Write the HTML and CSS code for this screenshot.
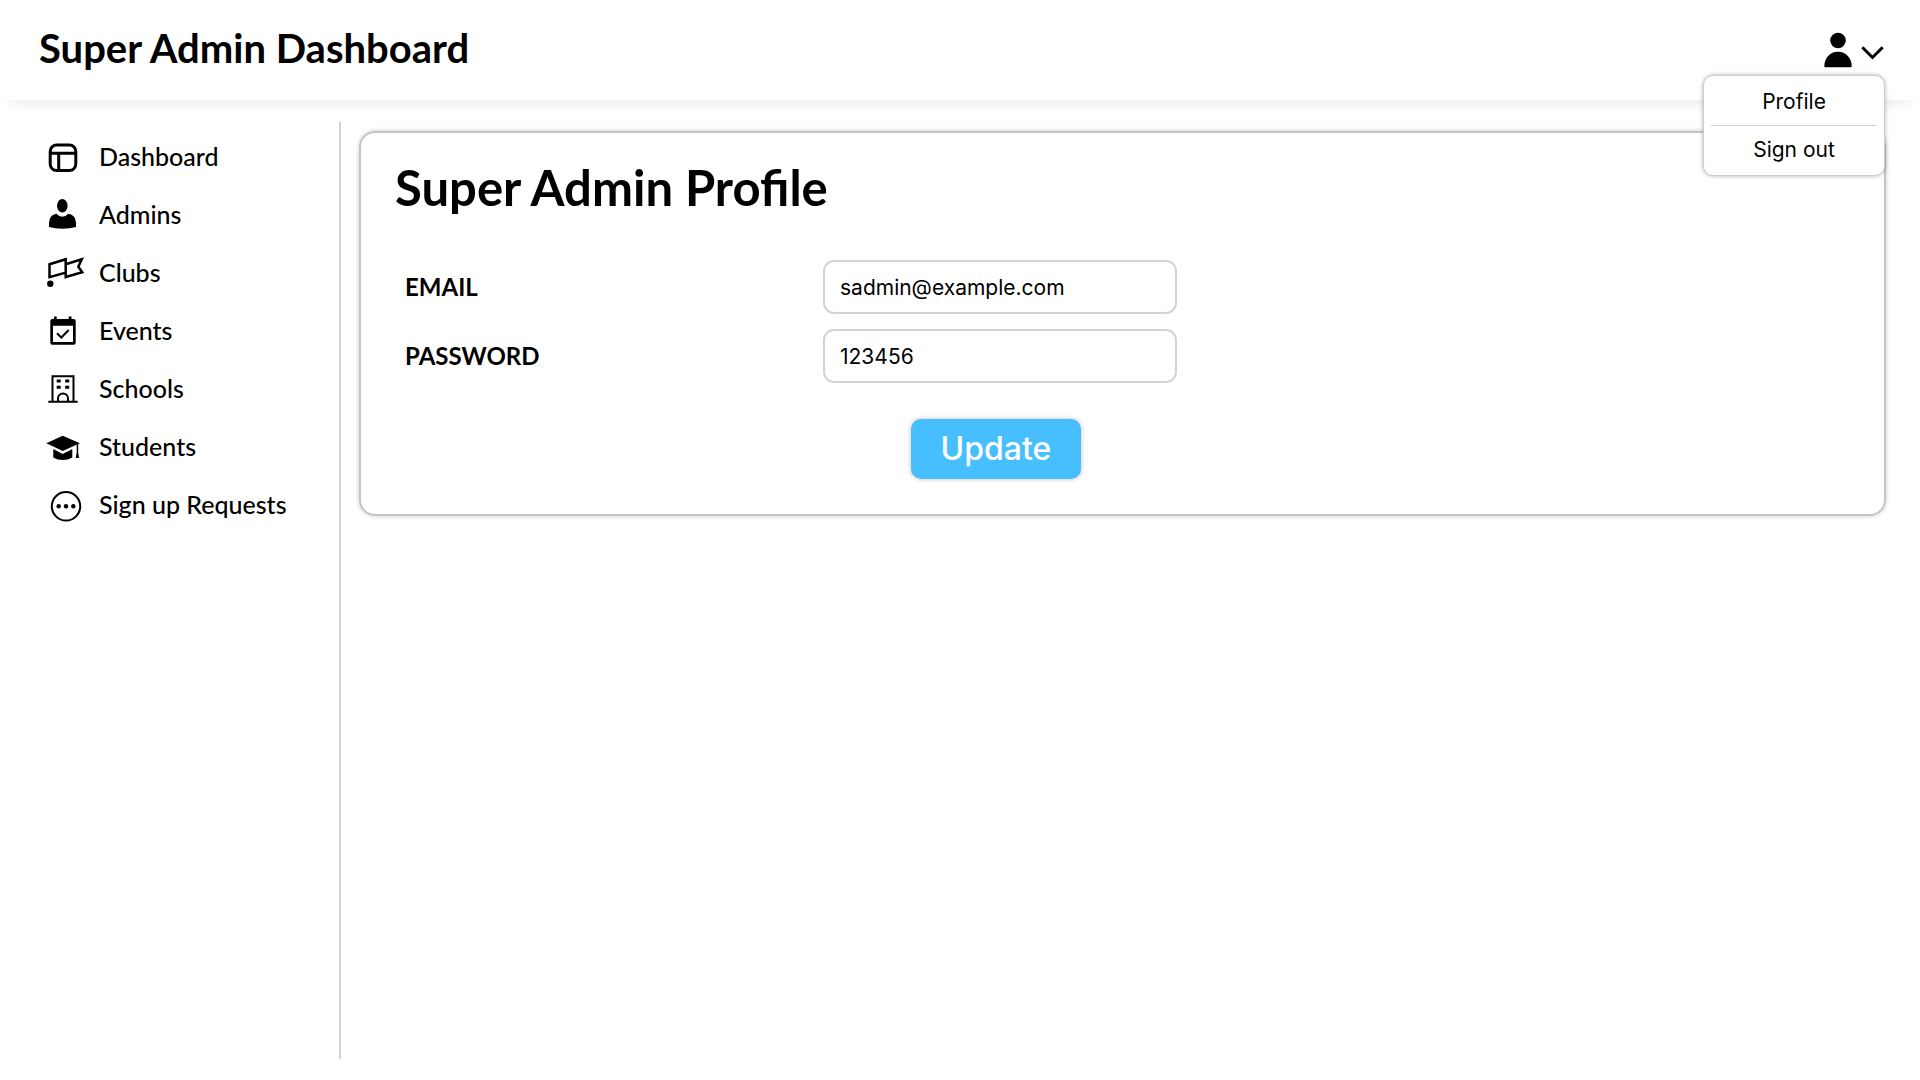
FILE: index.html
```html
<!DOCTYPE html>
<html lang="en">
<head>
<meta charset="utf-8">
<meta name="viewport" content="width=device-width, initial-scale=1">
<title>Super Admin Dashboard</title>
<link rel="stylesheet" href="styles.css">
</head>
<body>
<header class="topbar">
  <h1 class="topbar-title">Super Admin Dashboard</h1>
  <div class="account">
    <button class="account-toggle" type="button" aria-label="Account menu" aria-expanded="true">
      <svg width="62" height="40" viewBox="0 0 62 40">
        <circle cx="14" cy="10.5" r="7.8"/>
        <path d="M.3 36.2C.3 28 6 21.8 14 21.8S27.700 28 27.700 36.200Q27.700 37.300 26.500 37.300H1.500Q.3 37.300 .3 36.200Z"/>
        <path class="line thick" d="M38.300 17.300 48.500 27.500 58.700 17.300"/>
      </svg>
    </button>
    <div class="account-menu">
      <a class="account-link" href="#profile">Profile</a>
      <a class="account-link" href="#signout">Sign out</a>
    </div>
  </div>
</header>
<div class="layout">
  <nav class="sidebar">
    <a class="nav-link" href="#dashboard">
      <svg class="icon" viewBox="0 0 40 40"><g class="line thick"><rect x="6.200" y="7" width="25.600" height="25.600" rx="6.500"/><path d="M6.200 15.300H31.800M14.700 15.300V32.600"/></g></svg>
      Dashboard</a>
    <a class="nav-link" href="#admins">
      <svg class="icon" viewBox="0 0 40 40"><ellipse cx="18.300" cy="9.700" rx="5.300" ry="6.700"/><path d="M12.500 17.700Q15 20.700 18.300 20.700T24.200 17.700Q32 19 32 27V31Q26 32.700 18.500 32.700T5 31V27Q5 19 12.500 17.700Z"/></svg>
      Admins</a>
    <a class="nav-link" href="#clubs">
      <svg class="icon" viewBox="0 0 40 40"><circle cx="6.300" cy="29.700" r="3.200"/><path class="line medium" d="M5.500 10.300 21.700 5.200V18.600L5.500 23.200ZM21.700 10.300 37.800 5.200 34.300 12.700 38.300 18.300 21.700 23V10.300"/></svg>
      Clubs</a>
    <a class="nav-link" href="#events">
      <svg class="icon" viewBox="0 0 40 40"><path fill-rule="evenodd" d="M10 4.500H12.700V7H24.700V4.500H27.500V7H29.700Q31.700 7 31.700 9V30.700Q31.700 32.700 29.700 32.700H8.300Q6.300 32.700 6.300 30.700V9Q6.300 7 8.300 7H10ZM9 13.700V30H29V13.700Z"/><path class="line" d="M13 21.300 17.300 25.500 24.700 18"/></svg>
      Events</a>
    <a class="nav-link" href="#schools">
      <svg class="icon" viewBox="0 0 40 40"><path class="line" d="M4.300 31.700H33.700M8.500 31.700V6.200H29.500V31.700M14 31.700V28.500a5 5 0 0 1 10 0V31.700"/><path d="M12.700 9.500h4v3h-4zM21.200 9.500h4v3h-4zM12.700 15.700h4v3h-4zM21.200 15.700h4v3h-4z"/></svg>
      Schools</a>
    <a class="nav-link" href="#students">
      <svg class="icon" viewBox="0 0 40 40"><path d="M2.300 15.300 18.700 7.700 36 15.300 18.700 23ZM9.300 21 18.700 26 28.300 21V29.500Q24 32 18.700 32T9.300 29.500Z"/><path d="M32.700 15.800H34.200V24.500L35 30H31.700L32.700 24.500Z"/></svg>
      Students</a>
    <a class="nav-link" href="#requests">
      <svg class="icon" viewBox="0 0 40 40"><circle class="line" cx="22" cy="20.300" r="14.200"/><circle cx="14.700" cy="20.300" r="2.200"/><circle cx="22" cy="20.300" r="2.200"/><circle cx="29.300" cy="20.300" r="2.200"/></svg>
      Sign up Requests</a>
  </nav>
  <main class="content">
    <section class="card">
      <h2 class="card-title">Super Admin Profile</h2>
      <form class="form">
        <label class="label" for="email">EMAIL</label>
        <input class="field" id="email" type="text" value="sadmin@example.com">
        <label class="label" for="password">PASSWORD</label>
        <input class="field" id="password" type="text" value="123456">
        <button class="submit" type="button">Update</button>
      </form>
    </section>
  </main>
</div>
</body>
</html>
```
FILE: styles.css
```css
* {
  box-sizing: border-box;
}

body {
  display: flex;
  flex-direction: column;
  min-height: 100vh;
  margin: 0;
  background: #fff;
  color: #000;
  font-family: Lato, "Noto Sans", sans-serif;
}

a {
  color: inherit;
  text-decoration: none;
}

svg {
  display: block;
  fill: #000;
}

.line {
  fill: none;
  stroke: #000;
  stroke-width: 2;
}

.medium {
  stroke-width: 2.5;
}

.thick {
  stroke-width: 3;
}

.topbar {
  display: flex;
  align-items: center;
  justify-content: space-between;
  height: 100px;
  padding: 0 34px 0 39px;
  box-shadow: 0 14px 14px -12px rgba(0, 0, 0, 0.1);
}

.topbar-title {
  margin: 0;
  padding-bottom: 4px;
  font-size: 40px;
  line-height: 48px;
  font-weight: 700;
}

.account {
  position: relative;
}

.account-toggle {
  display: block;
  padding: 0;
  border: 0;
  background: none;
  cursor: pointer;
}

.account-menu {
  position: absolute;
  z-index: 2;
  top: 45px;
  right: 1px;
  width: 182px;
  padding: 2px 7px;
  border: 1px solid #ccc;
  border-radius: 10px;
  background: #fff;
  box-shadow: 0 0 4px rgba(0, 0, 0, 0.3);
}

.account-link {
  display: block;
  font-family: Inter, sans-serif;
  font-size: 21px;
  line-height: 47px;
  text-align: center;
}

.account-link + .account-link {
  border-top: 1px solid #d3d3d3;
}

.layout {
  display: flex;
  flex: 1;
  padding: 22px 34px 21px 0;
}

.sidebar {
  display: flex;
  flex: 0 0 341px;
  flex-direction: column;
  gap: 18px;
  padding: 16px 0 0 44px;
  border-right: 2px solid #d3d3d3;
}

.nav-link {
  display: flex;
  align-items: flex-start;
  gap: 15px;
  font-size: 25px;
  line-height: 36px;
  font-weight: 500;
}

.icon {
  flex: none;
  width: 40px;
  height: 40px;
}

.content {
  flex: 1;
  min-width: 0;
  padding: 9px 0 0 18px;
}

.card {
  padding: 24px 34px;
  border: 2px solid #c4c4c4;
  border-radius: 16px;
  box-shadow: 0 0 5px rgba(0, 0, 0, 0.2);
}

.card-title {
  margin: 0 0 43px;
  font-size: 49px;
  line-height: 60px;
  font-weight: 700;
}

.form {
  display: grid;
  grid-template-columns: 418px 354px;
  row-gap: 15px;
  align-items: center;
  padding: 0 10px 11px;
}

.label {
  font-size: 24px;
  line-height: 30px;
  font-weight: 700;
}

.field {
  width: 100%;
  height: 54px;
  padding: 0 15px;
  border: 2px solid #d3d3d3;
  border-radius: 11px;
  background: #fff;
  color: #000;
  font-family: Inter, sans-serif;
  font-size: 21px;
}

.submit {
  grid-column: 2;
  width: 170px;
  height: 60px;
  margin: 21px 0 0 88px;
  padding: 0 0 2px;
  border: 0;
  border-radius: 10px;
  background: #47bfff;
  box-shadow: 0 0 5px rgba(0, 0, 0, 0.25);
  color: #fff;
  font-family: Inter, sans-serif;
  font-size: 32px;
  font-weight: 500;
  cursor: pointer;
}
```
